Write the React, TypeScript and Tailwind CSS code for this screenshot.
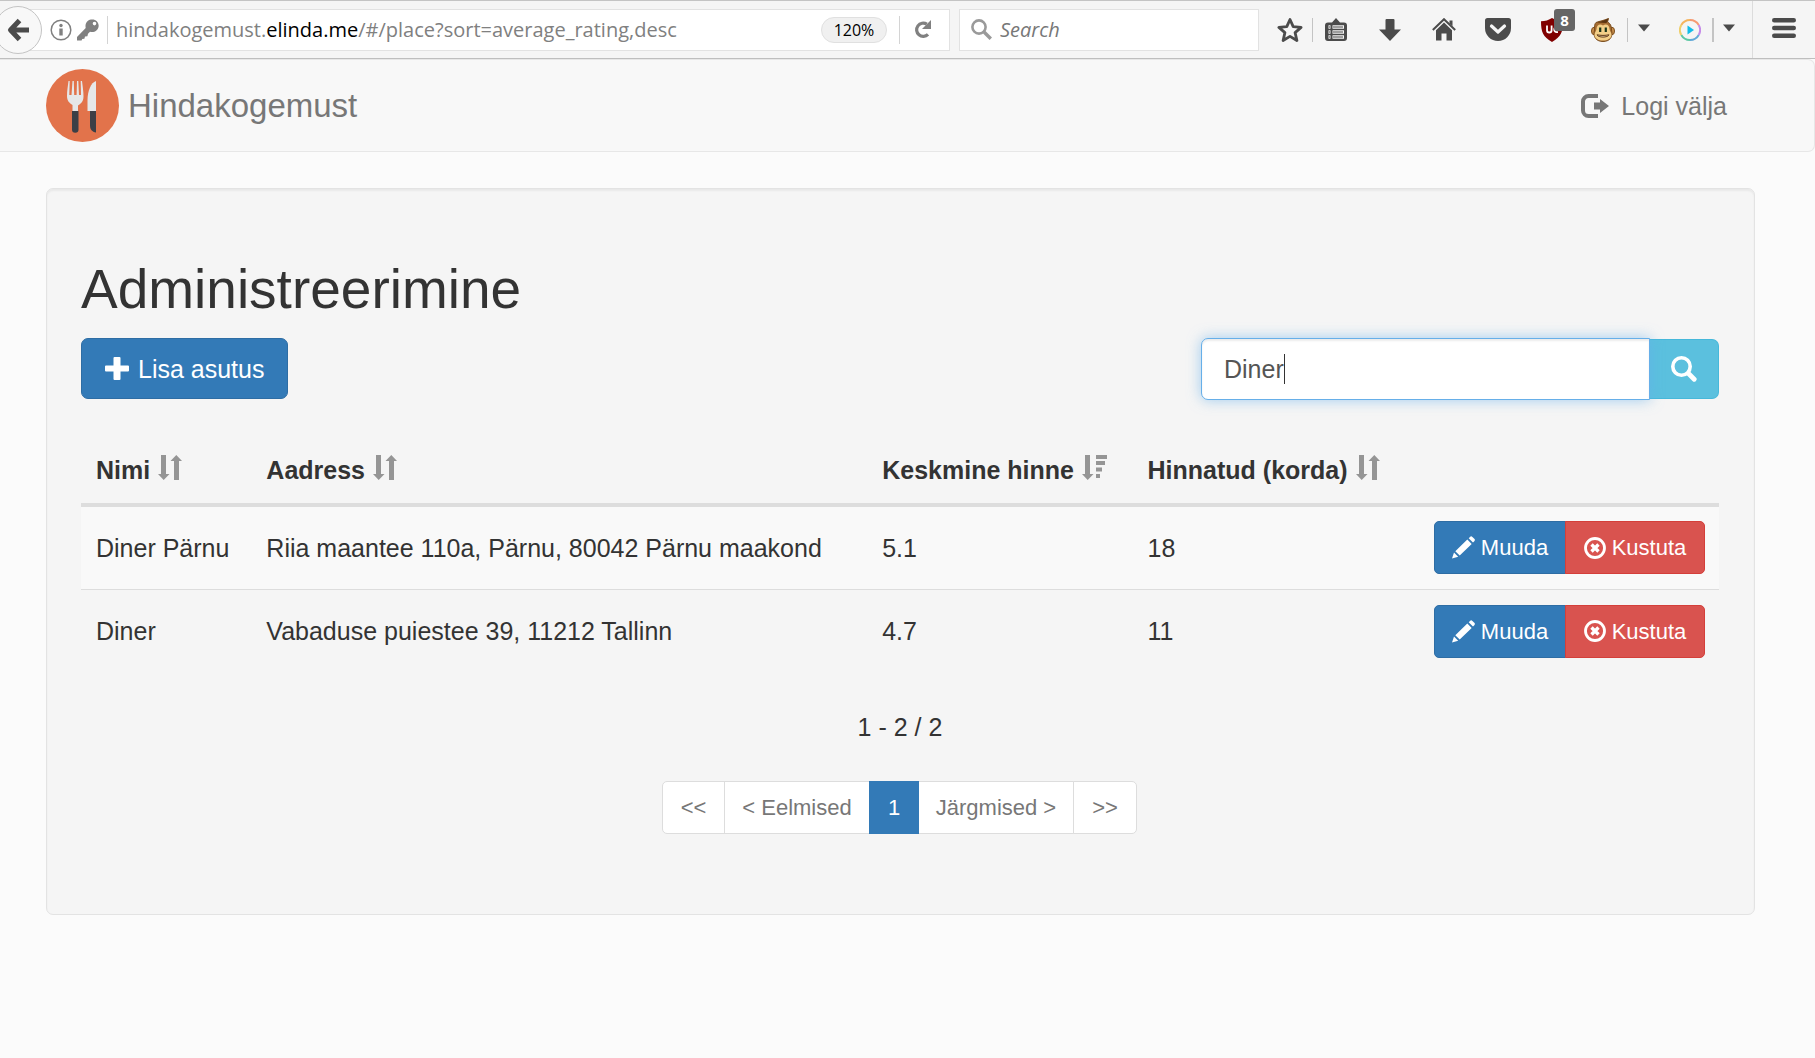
import React from "react";

type IconProps = { className?: string };

function BackIcon() {
  return (
    <svg viewBox="0 0 22 24" className="h-6 w-[22px]" fill="none" stroke="#4b4b4b" strokeWidth="5">
      <path d="M12.500 2.500 3.500 12l9 9.500M4 12h18" strokeLinejoin="round" />
    </svg>
  );
}
function InfoIcon() {
  return (
    <svg viewBox="0 0 22 22" className="size-[22px]" fill="none" stroke="#808080" strokeWidth="1.500">
      <circle cx="11" cy="11" r="9.800" />
      <circle cx="11" cy="6.500" r="1.700" fill="#808080" stroke="none" />
      <path d="M11 9.500v7" strokeWidth="3.400" />
    </svg>
  );
}
function KeyIcon() {
  return (
    <svg viewBox="0 0 22 22" className="size-[22px]" fill="#808080">
      <path
        fillRule="evenodd"
        d="M14 0.500c4.500-.8 8.200 2.500 7.600 7-.6 4.200-4.600 6.500-8.600 5.300l-2 2-.6 2.400-2.400.4-.6 2.200-2.200.2-.6 1.600H0v-3.500L8.700 9C7.800 5 10 1.200 14 .500zm3.500 2.300a1.800 1.800 0 1 0 0 3.600 1.800 1.800 0 0 0 0-3.600z"
      />
    </svg>
  );
}
function ReloadIcon() {
  return (
    <svg viewBox="0 0 18 19" className="h-[19px] w-[18px]">
      <path d="M12.800 4.200A6.600 6.600 0 1 0 14 14.300" fill="none" stroke="#808080" strokeWidth="3.200" />
      <path d="M17 0v9H8z" fill="#808080" />
    </svg>
  );
}
function ToolbarSearchIcon() {
  return (
    <svg viewBox="0 0 21 21" className="size-[21px]" fill="none" stroke="#9a9a9a">
      <circle cx="8" cy="8" r="6.600" strokeWidth="2.600" />
      <path d="m12.800 12.800 7 7" strokeWidth="3.400" />
    </svg>
  );
}
function StarIcon() {
  return (
    <svg viewBox="0 0 26 26" className="size-[26px]" fill="none" stroke="#4b4b4b" strokeWidth="2.800" strokeLinejoin="round">
      <path d="m13 2.500 3.200 7.100 7.900.8-6 5.200 1.800 7.900-6.900-4.100-6.900 4.100 1.800-7.900-6-5.200 7.900-.8z" />
    </svg>
  );
}
function ClipboardIcon() {
  return (
    <svg viewBox="0 0 22 24" className="h-6 w-[22px]">
      <path d="M7 4.500 11 0l4 4.500h4a3 3 0 0 1 3 3V20a3 3 0 0 1-3 3H3a3 3 0 0 1-3-3V7.500a3 3 0 0 1 3-3z" fill="#4b4b4b" />
      <path d="M3.500 9h2M3.500 14h2M3.500 19h2M7.500 9H19M7.500 14H19M7.500 19H19" stroke="#f5f5f5" strokeWidth="3.600" />
      <path d="M4 9h1M4 14h1M4 19h1M8 9h10M8 14h10M8 19h10" stroke="#4b4b4b" strokeWidth="1.200" />
    </svg>
  );
}
function DownloadIcon() {
  return (
    <svg viewBox="0 0 22 22" className="size-[22px]" fill="#4b4b4b">
      <path d="M7.500 0h7a1 1 0 0 1 1 1v9.500H22L11 22 0 10.500h6.500V1a1 1 0 0 1 1-1z" />
    </svg>
  );
}
function HomeIcon() {
  return (
    <svg viewBox="0 0 24 23" className="h-[23px] w-6">
      <path d="M.8 12 12 1.200 23.200 12" fill="none" stroke="#4b4b4b" strokeWidth="2" />
      <path d="M17.500 2.500h3V8l-3-2.500zM12 4.500l8 7.800V22.500h-5.500v-7h-5v7H4V12.300z" fill="#4b4b4b" />
    </svg>
  );
}
function PocketIcon() {
  return (
    <svg viewBox="0 0 26 23" className="h-[23px] w-[26px]">
      <path d="M2.500 0h21A2.500 2.500 0 0 1 26 2.500V10a13 13 0 0 1-26 0V2.500A2.500 2.500 0 0 1 2.500 0z" fill="#4b4b4b" />
      <path d="m6.500 8 6.500 6 6.500-6" fill="none" stroke="#f5f5f5" strokeWidth="3.200" strokeLinecap="round" strokeLinejoin="round" />
    </svg>
  );
}
function ShieldIcon() {
  return (
    <svg viewBox="0 0 22 24" className="h-6 w-[22px]">
      <path d="M11 0c3 2 7 3.300 11 3.300C22 14 20 19 11 24 2 19 0 14 0 3.300 4 3.300 8 2 11 0z" fill="#800000" />
      <path d="M6 7.500v4.700a2.300 2.300 0 0 0 4.600 0V7.500M17 8.800h-1.700a2.800 2.800 0 0 0 0 5.400H17" fill="none" stroke="#fff" strokeWidth="1.800" />
    </svg>
  );
}
function MonkeyIcon() {
  return (
    <svg viewBox="0 0 24 24" className="size-6">
      <ellipse cx="3" cy="13" rx="2.500" ry="3.700" fill="#c98f4c" stroke="#7a4d1e" />
      <ellipse cx="21" cy="13" rx="2.500" ry="3.700" fill="#c98f4c" stroke="#7a4d1e" />
      <path d="M5 4.500C9 3 13 2.500 17.500.5L16.500 4c3 1.500 4 4 4 8 2 7-2 11.500-8.500 11.500S1.500 19 3.500 12C3.500 8 3.500 6 5 4.500z" fill="#a56c31" stroke="#7a4d1e" />
      <path d="M6 4.500C10 3.500 13 2.500 17.500.5L15.500 5z" fill="#5c3511" />
      <path d="M12 7.500C9 5 5.500 7 5.500 11c0 2-2 3-2 6 0 3.500 4 5.500 8.500 5.500s8.500-2 8.500-5.500c0-3-2-4-2-6 0-4-3.500-6-6.500-3.500z" fill="#f3cf88" />
      <path d="M9.200 9.500v4.500M14.800 9.500v4.500" stroke="#1c3518" strokeWidth="2.200" />
      <path d="M6 16.800c4 .8 8 .8 12 0-1 3-11 3-12 0z" fill="#fff0d0" stroke="#5c3511" />
    </svg>
  );
}
function PlayIcon() {
  return (
    <svg viewBox="0 0 22 22" className="size-[22px]">
      <g fill="none" strokeWidth="2">
        <path d="M11 1a10 10 0 0 1 8.700 5" stroke="#f59a72" />
        <path d="M19.700 6a10 10 0 0 1 0 10" stroke="#c58be8" />
        <path d="M19.700 16A10 10 0 0 1 11 21" stroke="#62a9d8" />
        <path d="M11 21a10 10 0 0 1-8.700-5" stroke="#5cc7a3" />
        <path d="M2.300 16a10 10 0 0 1 0-10" stroke="#efcf6b" />
        <path d="M2.300 6A10 10 0 0 1 11 1" stroke="#f5b45f" />
      </g>
      <path d="M8.500 6.500v9l6.500-4.500z" fill="#12bce8" />
    </svg>
  );
}
function CaretIcon() {
  return (
    <svg viewBox="0 0 12 8" className="h-2 w-3" fill="#4b4b4b">
      <path d="M0 .5h12L6 7.500z" />
    </svg>
  );
}
function MenuIcon() {
  return (
    <svg viewBox="0 0 24 20" className="h-5 w-6" stroke="#4b4b4b" strokeWidth="4.400" strokeLinecap="round">
      <path d="M2.200 2.200h19.600M2.200 10h19.600M2.200 17.800h19.600" />
    </svg>
  );
}
function LogoIcon() {
  return (
    <svg viewBox="0 0 73 73" className="size-[73px]">
      <circle cx="36.500" cy="36.500" r="36.500" fill="#e2734b" />
      <path
        d="M22.500 12c-.6 5-1.500 10-1.500 15 0 5 2.500 7 5.500 9V43h5.500v-6.500c3-2 5.500-4 5.500-9 0-5-.9-10.500-1.500-15.500h-1.300l.3 14h-2l-.7-14H31L30.600 26h-2.400l-.4-14h-1.300L25.500 26h-2.200l.4-14z"
        fill="#e6e7e8"
      />
      <path d="M26 42h6.500v18.500a3.200 3.200 0 0 1-6.500 0z" fill="#3c3f46" />
      <path d="M50 12c-5 1.500-8.500 10-8.500 19v11H50z" fill="#e6e7e8" />
      <path d="M44 42h6v21.500c-4-.5-6-3-6-7z" fill="#3c3f46" />
    </svg>
  );
}
function LogoutIcon() {
  return (
    <svg viewBox="0 0 28 24" className="h-6 w-7">
      <path d="M17 2H7.500a5.500 5.500 0 0 0-5.500 5.500v9A5.500 5.500 0 0 0 7.500 22H17" fill="none" stroke="#777" strokeWidth="4" />
      <path d="M13 8.500h6V5l9 7-9 7v-3.500h-6z" fill="#777" />
    </svg>
  );
}
function PlusIcon() {
  return (
    <svg viewBox="0 0 24 24" className="h-6 w-6" fill="currentColor">
      <path d="M9.500 0h5a1 1 0 0 1 1 1v7.500H23a1 1 0 0 1 1 1v4a1 1 0 0 1-1 1h-7.500V22a1 1 0 0 1-1 1h-5a1 1 0 0 1-1-1v-7.500H1a1 1 0 0 1-1-1v-4a1 1 0 0 1 1-1h7.500V1a1 1 0 0 1 1-1z" />
    </svg>
  );
}
function SearchIcon() {
  return (
    <svg viewBox="0 0 26 26" className="size-[26px]" fill="none" stroke="currentColor">
      <circle cx="10.500" cy="10.500" r="8.700" strokeWidth="3.600" />
      <path d="m17.500 17.500 5.700 5.700" strokeWidth="4.800" strokeLinecap="round" />
    </svg>
  );
}
function SortIcon({ className = "" }: IconProps) {
  return (
    <svg viewBox="0 0 24 25" className={`h-[25px] w-6 ${className}`} fill="#959595">
      <path d="M3 0h5v19h3.500L5.700 25 0 19h3zM16 25V6h-3.500L18.300 0 24 6h-3v19z" />
    </svg>
  );
}
function SortDescIcon({ className = "" }: IconProps) {
  return (
    <svg viewBox="0 0 25 25" className={`size-[25px] ${className}`} fill="#959595">
      <path d="M3 0h5v19h3.500L5.700 25 0 19h3zM14 0h11v4H14zM14 6h9v4h-9zM14 12.500h6v4h-6zM14 19h4v4h-4z" />
    </svg>
  );
}
function PencilIcon() {
  return (
    <svg viewBox="0 0 23 23" className="size-[23px]" fill="currentColor">
      <path d="M0 22.500 2 16.500l4.200 4.200zM3.300 15.200 15.300 3.500l4.400 4.400L7.700 19.600zM16.700 2.200 18 .9c.8-.8 1.600-.8 2.400 0l1.900 1.900c.8.8.8 1.600 0 2.400l-1.300 1.300z" />
    </svg>
  );
}
function RemoveIcon() {
  return (
    <svg viewBox="0 0 22 22" className="size-[22px]" fill="none" stroke="currentColor">
      <circle cx="11" cy="11" r="9.500" strokeWidth="2.800" />
      <path d="m7.500 7.500 7 7m0-7-7 7" strokeWidth="3.400" />
    </svg>
  );
}

function ToolButton({ label, className, children }: { label: string; className: string; children: React.ReactNode }) {
  return (
    <button type="button" aria-label={label} className={`flex h-full shrink-0 items-center justify-center ${className}`}>
      {children}
    </button>
  );
}

function BrowserBar() {
  return (
    <div className="flex h-[59px] items-center border-t border-b border-t-[#c4c4c4] border-b-[#bebebe] bg-[#f5f5f5] font-['Open_Sans',sans-serif]">
      <button
        type="button"
        aria-label="Back"
        className="relative z-10 -ml-[6px] flex size-12 shrink-0 items-center justify-center rounded-full border border-[#c4c4c4] bg-[#f8f8f8]"
      >
        <BackIcon />
      </button>
      <div className="-ml-3 flex h-[42px] min-w-0 flex-1 items-center border border-[#e2e2e2] bg-white pl-[19px]">
        <InfoIcon />
        <span className="ml-[5px]"><KeyIcon /></span>
        <span className="mx-2 h-7 w-px shrink-0 bg-[#d4d4d4]" />
        <div className="min-w-0 flex-1 overflow-hidden text-[20px] leading-7 whitespace-nowrap text-[#808080]">
          hindakogemust.<span className="text-black">elinda.me</span>/#/place?sort=average_rating,desc
        </div>
        <button type="button" className="h-[26px] w-[66px] shrink-0 rounded-full border border-[#e0e0e0] bg-[#f0f0f0] text-[16px] leading-6 text-black">
          120%
        </button>
        <span className="ml-3 h-7 w-px shrink-0 bg-[#d4d4d4]" />
        <ToolButton label="Reload" className="w-[49px] pr-1"><ReloadIcon /></ToolButton>
      </div>
      <label className="ml-[9px] flex h-[42px] w-[300px] shrink-0 items-center gap-2 border border-[#e2e2e2] bg-white pl-[11px]">
        <ToolbarSearchIcon />
        <input
          type="text"
          aria-label="Search"
          placeholder="Search"
          className="min-w-0 flex-1 text-[20px] italic outline-none placeholder:text-[#777]"
        />
      </label>
      <ToolButton label="Bookmark" className="w-[53px] pl-2"><StarIcon /></ToolButton>
      <span className="h-6 w-px bg-[#c4c4c4]" />
      <ToolButton label="Bookmarks list" className="w-[50px] pr-1"><ClipboardIcon /></ToolButton>
      <ToolButton label="Downloads" className="w-[54px]"><DownloadIcon /></ToolButton>
      <ToolButton label="Home" className="w-[54px]"><HomeIcon /></ToolButton>
      <ToolButton label="Pocket" className="w-[54px]"><PocketIcon /></ToolButton>
      <ToolButton label="Content blocker" className="relative w-[54px]">
        <ShieldIcon />
        <span className="absolute top-2 right-1 h-[22px] w-[21px] rounded-[3px] bg-[#666] text-center text-[15px] leading-[22px] font-bold text-white">8</span>
      </ToolButton>
      <ToolButton label="Scripts" className="w-[48px]"><MonkeyIcon /></ToolButton>
      <span className="h-6 w-px bg-[#c4c4c4]" />
      <ToolButton label="Script options" className="w-[32px] pb-1"><CaretIcon /></ToolButton>
      <ToolButton label="Play" className="w-[52px] pl-2"><PlayIcon /></ToolButton>
      <span className="h-6 w-0.5 bg-[#c4c4c4]" />
      <ToolButton label="Play options" className="w-[30px] pb-1"><CaretIcon /></ToolButton>
      <span className="ml-2 h-full w-px bg-[#dcdcdc]" />
      <ToolButton label="Menu" className="w-[62px] pb-1"><MenuIcon /></ToolButton>
    </div>
  );
}

const places = [
  { name: "Diner Pärnu", address: "Riia maantee 110a, Pärnu, 80042 Pärnu maakond", rating: "5.1", count: "18" },
  { name: "Diner", address: "Vabaduse puiestee 39, 11212 Tallinn", rating: "4.7", count: "11" },
];

const columns = [
  { label: "Nimi", width: "w-[10.4%]", Icon: SortIcon },
  { label: "Aadress", width: "w-[37.6%]", Icon: SortIcon },
  { label: "Keskmine hinne", width: "w-[16.2%]", Icon: SortDescIcon },
  { label: "Hinnatud (korda)", width: "w-[17.2%]", Icon: SortIcon },
];

function PlacesTable() {
  return (
    <table className="mt-9 w-full table-fixed border-collapse text-left whitespace-nowrap">
      <thead>
        <tr className="h-[69px] border-b-4 border-[#ddd]">
          {columns.map(({ label, width, Icon }) => (
            <th key={label} className={`${width} px-[15px] font-bold`}>
              <button type="button" className="flex items-center gap-2">
                {label}
                <Icon className="mb-1" />
              </button>
            </th>
          ))}
          <th aria-label="Tegevused" />
        </tr>
      </thead>
      <tbody>
        {places.map((place) => (
          <tr key={place.name} className="h-[84px] border-[#ddd] odd:border-b odd:bg-[#f9f9f9]">
            <td className="px-[15px]">{place.name}</td>
            <td className="px-[15px]">{place.address}</td>
            <td className="px-[15px]">{place.rating}</td>
            <td className="px-[15px]">{place.count}</td>
            <td className="pr-[14px]">
              <div className="flex justify-end text-[22px] leading-[33px] text-white">
                <button type="button" className="flex h-[53px] w-[132px] items-center justify-center gap-1.5 rounded-l-[5px] border border-[#2e6da4] bg-[#337ab7]">
                  <PencilIcon />
                  Muuda
                </button>
                <button type="button" className="-ml-px flex h-[53px] w-[140px] items-center justify-center gap-1.5 rounded-r-[5px] border border-[#d43f3a] bg-[#d9534f]">
                  <RemoveIcon />
                  Kustuta
                </button>
              </div>
            </td>
          </tr>
        ))}
      </tbody>
    </table>
  );
}

function Pagination() {
  const item = "-ml-px h-[53px] border border-[#ddd] bg-white text-[#777]";
  return (
    <nav aria-label="Leheküljed" className="mt-9 flex justify-center text-[22px] leading-[33px]">
      <button type="button" className={`${item} w-[63px] rounded-l-[5px]`}>&lt;&lt;</button>
      <button type="button" className={`${item} w-[146px]`}>&lt; Eelmised</button>
      <button type="button" aria-current="page" className="z-10 -ml-px h-[53px] w-[50px] bg-[#337ab7] text-white">1</button>
      <button type="button" className={`${item} w-[156px]`}>Järgmised &gt;</button>
      <button type="button" className={`${item} w-[64px] rounded-r-[5px]`}>&gt;&gt;</button>
    </nav>
  );
}

export default function App() {
  return (
    <div className="min-h-screen bg-[#fbfbfb] font-['Liberation_Sans',Arial,sans-serif] text-[25px] leading-9 text-[#333]">
      <BrowserBar />
      <header className="flex h-[93px] items-center justify-between rounded-r-[7px] border-t border-r border-b border-[#e7e7e7] bg-[#f8f8f8] pr-[87px] pl-[46px] text-[#777]">
        <a href="#/" className="flex items-center gap-[9px] text-[33px]">
          <LogoIcon />
          Hindakogemust
        </a>
        <a href="#/logout" className="flex items-center gap-3">
          <LogoutIcon />
          Logi välja
        </a>
      </header>
      <main className="mt-9 mr-[60px] ml-[46px] rounded-[7px] border border-[#e3e3e3] bg-[#f5f5f5] pt-[70px] pr-[35px] pb-20 pl-[34px] shadow-[inset_0_2px_2px_rgba(0,0,0,0.05)]">
        <h2 className="text-[55px] leading-[60px]">Administreerimine</h2>
        <div className="mt-[19px] flex items-start justify-between">
          <button type="button" className="flex h-[61px] items-center gap-[9px] rounded-[7px] border border-[#2e6da4] bg-[#337ab7] px-[23px] text-white">
            <PlusIcon />
            Lisa asutus
          </button>
          <form className="flex items-center" onSubmit={(e) => e.preventDefault()}>
            <div className="relative z-10">
              <input
                type="text"
                aria-label="Otsi"
                defaultValue="Diner"
                className="block h-[62px] w-[449px] rounded-l-[7px] border border-[#66afe9] bg-white px-[22px] text-[#555] shadow-[inset_0_2px_2px_rgba(0,0,0,0.075),0_0_14px_rgba(102,175,233,0.6)] outline-none"
              />
              <span className="absolute top-4 left-[83px] h-[30px] w-px bg-[#333]" />
            </div>
            <button type="submit" aria-label="Otsi" className="flex h-[60px] w-[69px] items-center justify-center rounded-r-[7px] border border-l-0 border-[#46b8da] bg-[#5bc0de] text-white">
              <SearchIcon />
            </button>
          </form>
        </div>
        <PlacesTable />
        <p className="mt-9 text-center">1 - 2 / 2</p>
        <Pagination />
      </main>
    </div>
  );
}
